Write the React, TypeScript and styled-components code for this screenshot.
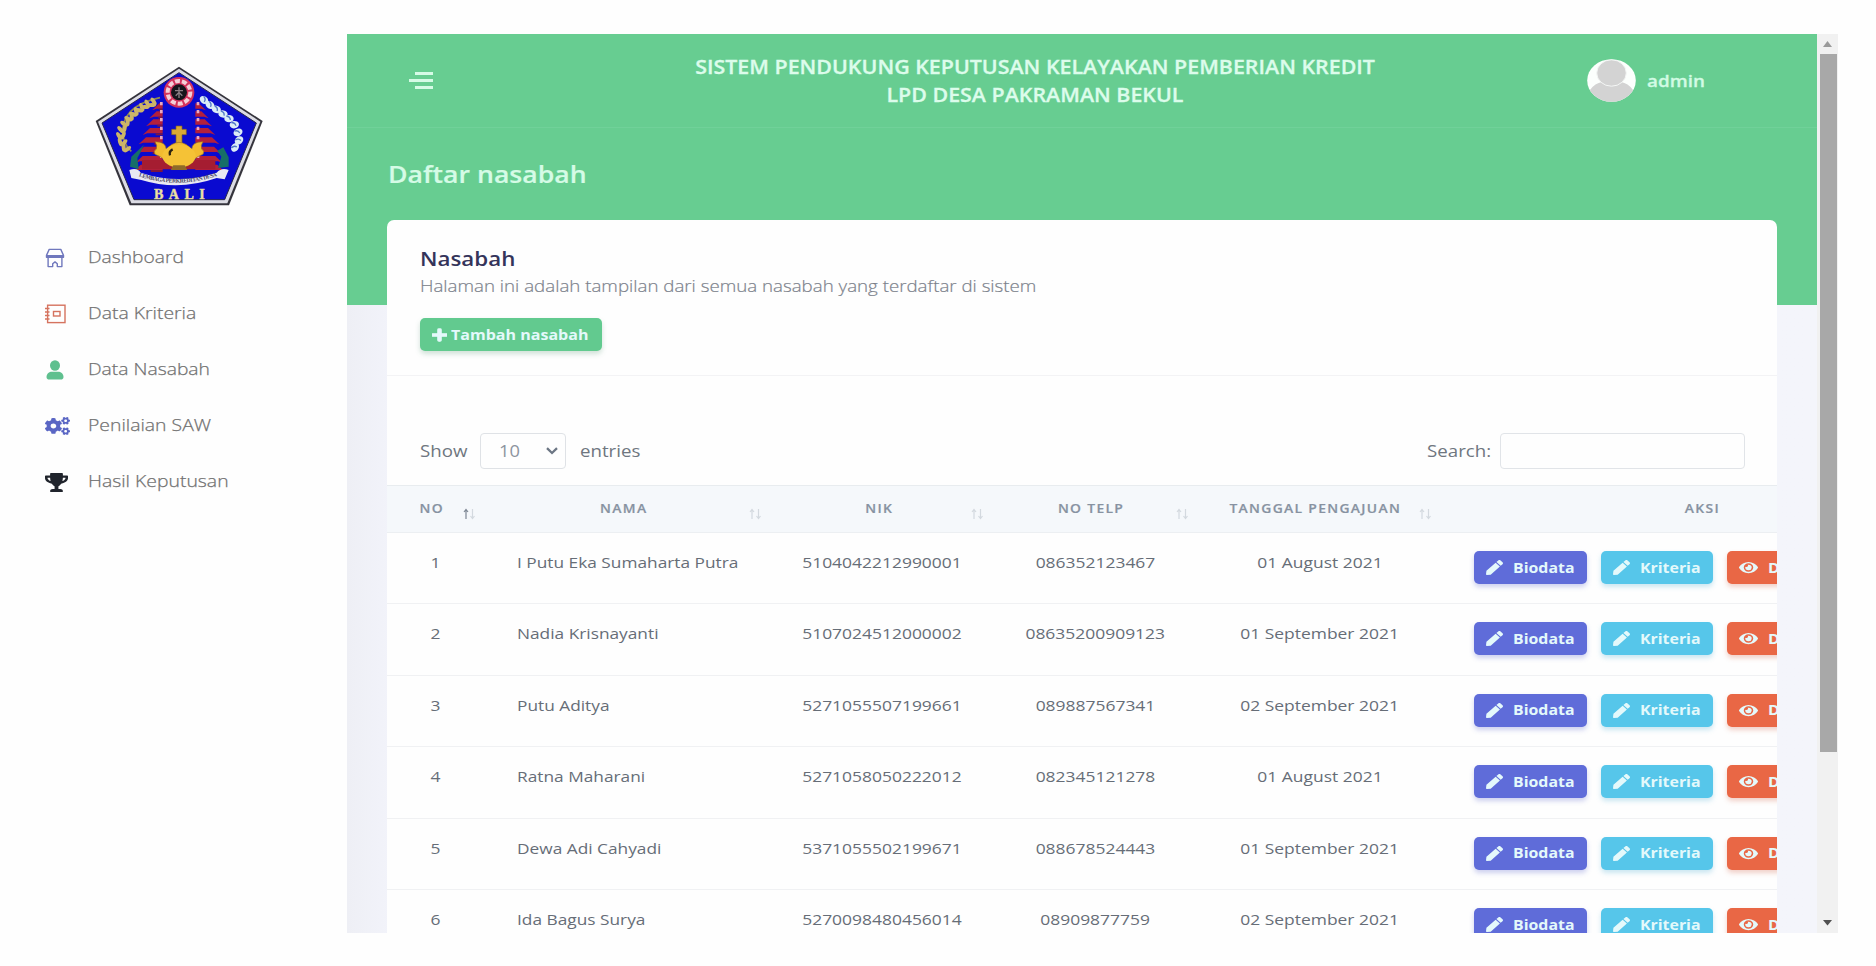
import React from "react";
import styled, { createGlobalStyle } from "styled-components";
import { FaCogs, FaTrophy, FaPlus, FaPen, FaEye } from "react-icons/fa";

const GlobalStyle = createGlobalStyle`
  * { box-sizing: border-box; }
  body {
    margin: 0;
    background: #fefefe;
    font-family: "Open Sans", "Noto Sans", sans-serif;
  }
`;

const COLUMNS = "97.5px 286.5px 222px 205px 243px 522px";

/* Horizontally extended text; `$origin` says which edge stays in place. */
const Wide = styled.span<{ $x?: number; $origin?: string }>`
  display: inline-block;
  white-space: nowrap;
  transform: scaleX(${(p) => p.$x ?? 1.14});
  transform-origin: ${(p) => p.$origin ?? "left"} center;
`;

const Screen = styled.div`
  display: flex;
  width: 1838px;
  height: 899px;
  margin-top: 34px;
  overflow: hidden;
`;

const Sidebar = styled.aside`
  width: 347px;
  flex: none;
  padding: 32px 0 0 44px;
`;

const Crest = styled.svg`
  display: block;
  width: 168px;
  height: 140px;
  margin-left: 51px;
`;

const Menu = styled.nav`
  display: flex;
  flex-direction: column;
  margin-top: 23px;
`;

const MenuItem = styled.a`
  display: flex;
  align-items: center;
  height: 56px;
  color: #6e6e6e;
  font-size: 17px;
  font-weight: 300;
  line-height: 24px;
  -webkit-text-stroke: 0.25px #777;
`;

const MenuIcon = styled.span`
  display: flex;
  width: 44px;
  padding: 2px 0 0 1px;
`;

const Main = styled.main`
  flex: 1;
  min-width: 0;
  height: 899px;
  overflow: hidden;
  background: linear-gradient(90deg, #eeeff5, #f2f3fa 3%, #f4f5fb);
`;

const Hero = styled.header`
  height: 270.5px;
  background: #67cd91;
`;

const TopBar = styled.div`
  display: flex;
  height: 94px;
  padding: 0 113px 0 62px;
  border-bottom: 1px solid #70d199;
`;

const Burger = styled.button`
  display: flex;
  flex-direction: column;
  align-items: flex-end;
  gap: 4px;
  width: 24px;
  margin: 38px 0 0;
  padding: 0;
  border: 0;
  background: none;
`;

const BurgerLine = styled.span<{ $w: number }>`
  width: ${(p) => p.$w}px;
  height: 3px;
  background: #d6fbe6;
`;

const SystemTitle = styled.div`
  flex: none;
  width: 700px;
  margin: 19px 0 0 252px;
  color: #dcfceb;
  font-size: 19px;
  font-weight: 600;
  line-height: 28.4px;
  text-align: center;
  -webkit-text-stroke: 0.3px #dcfceb;
`;

const Account = styled.div`
  display: flex;
  align-items: center;
  gap: 10.5px;
  height: 43px;
  margin: 25px 0 0 202px;
  color: #d2fbe4;
  font-size: 16.7px;
  font-weight: 600;
  -webkit-text-stroke: 0.3px #d2fbe4;
`;

const PageTitle = styled.h1`
  margin: 0;
  padding: 29px 0 0 40.5px;
  color: #d5fbe6;
  font-size: 23.5px;
  font-weight: 600;
  line-height: 34px;
  -webkit-text-stroke: 0.2px #d5fbe6;
`;

const Card = styled.section`
  width: 1390px;
  height: 900px;
  margin: -84.5px 0 0 40px;
  overflow: hidden;
  border-radius: 7px 7px 0 0;
  background: #fefefe;
`;

const CardHeader = styled.div`
  height: 156px;
  padding: 25px 0 0 32.5px;
  border-bottom: 1px solid #f3f3f5;
`;

const CardTitle = styled.h2`
  margin: 0;
  color: #34345a;
  font-size: 19.6px;
  font-weight: 600;
  line-height: 28px;
`;

const CardText = styled.p`
  margin: 0;
  color: #777c86;
  font-size: 16.45px;
  font-weight: 300;
  line-height: 26px;
  -webkit-text-stroke: 0.2px #8a8f99;
`;

const Button = styled.button<{ $bg: string; $w: number; $shadow: string }>`
  display: flex;
  flex: none;
  align-items: center;
  width: ${(p) => p.$w}px;
  height: 33px;
  padding: 0 0 0 12px;
  border: 0;
  border-radius: 5px;
  background: ${(p) => p.$bg};
  box-shadow: 0 3px 5px ${(p) => p.$shadow};
  color: #e4f9fb;
  font: 700 14.2px/20px "Open Sans", sans-serif;
`;

const AddButton = styled(Button)`
  gap: 4.5px;
  margin-top: 19px;
`;

const ActionButton = styled(Button)`
  gap: 9.5px;
`;

const Controls = styled.div`
  display: flex;
  align-items: center;
  height: 36px;
  margin: 57px 32px 16px 32.5px;
  color: #6f7680;
  font-size: 16.7px;
`;

const Label = styled.label<{ $w: number }>`
  flex: none;
  width: ${(p) => p.$w}px;
  line-height: 24px;
`;

const LengthSelect = styled.div`
  display: flex;
  align-items: center;
  justify-content: space-between;
  width: 86px;
  height: 36px;
  margin-right: 14px;
  padding: 0 7px 0 18px;
  border: 1px solid #dfe2e6;
  border-radius: 4px;
  color: #8d949e;
  font-size: 16px;
`;

const SearchInput = styled.input`
  width: 245px;
  height: 36px;
  border: 1px solid #e1e4e8;
  border-radius: 4px;
  background: #fefefe;
`;

const Spacer = styled.div`
  flex: 1;
`;

const HeadRow = styled.div`
  display: grid;
  grid-template-columns: ${COLUMNS};
  width: 1576px;
  height: 48px;
  border-top: 1px solid #e8ecef;
  border-bottom: 1px solid #eceff2;
  background: #f5f8fb;
`;

const HeadCell = styled.div<{ $shift: number }>`
  display: grid;
  align-items: center;
  justify-items: center;
  padding-bottom: 1px;
  color: #8792a1;
  font-size: 12.2px;
  font-weight: 600;
  letter-spacing: 1.15px;
  -webkit-text-stroke: 0.2px #8b96a5;

  > * { grid-area: 1 / 1; }
  > span { margin-right: ${(p) => p.$shift}px; }
`;

const SortMark = styled.svg`
  justify-self: end;
  width: 12px;
  height: 12px;
  margin: 11px 10px 0 0;
  fill: none;
  stroke-width: 1.2;
`;

const Row = styled.div`
  display: grid;
  grid-template-columns: ${COLUMNS};
  width: 1576px;
  height: 71.45px;
  border-bottom: 1.5px solid #f0f1f3;
  color: #666d77;
  font-size: 15.3px;
  line-height: 22px;
`;

const Cell = styled.div<{ $left?: boolean }>`
  padding: 18px 0 0 ${(p) => (p.$left ? "32px" : "0")};
  text-align: ${(p) => (p.$left ? "left" : "center")};
`;

const Actions = styled.div`
  display: flex;
  gap: 14px;
  padding: 18px 0 0 33px;
`;

const Scrollbar = styled.div`
  display: flex;
  flex-direction: column;
  align-items: center;
  justify-content: space-between;
  width: 21px;
  height: 899px;
  padding: 7px 0;
  background: #f1f1f1;
`;

const Thumb = styled.div`
  width: 17.5px;
  height: 698px;
  margin: 7px 0 auto 2px;
  background: #a8a8a8;
`;

const Arrow = styled.svg`
  width: 9px;
  height: 6px;
`;

const rows = [
  ["I Putu Eka Sumaharta Putra", "5104042212990001", "086352123467", "01 August 2021"],
  ["Nadia Krisnayanti", "5107024512000002", "08635200909123", "01 September 2021"],
  ["Putu Aditya", "5271055507199661", "089887567341", "02 September 2021"],
  ["Ratna Maharani", "5271058050222012", "082345121278", "01 August 2021"],
  ["Dewa Adi Cahyadi", "5371055502199671", "088678524443", "01 September 2021"],
  ["Ida Bagus Surya", "5270098480456014", "08909877759", "02 September 2021"],
];

const heads = [
  { label: "NO", shift: 8 },
  { label: "NAMA", shift: 8 },
  { label: "NIK", shift: 6 },
  { label: "NO TELP", shift: 8 },
  { label: "TANGGAL PENGAJUAN", shift: 8 },
  { label: "AKSI", shift: 0 },
];

const stretch = { preserveAspectRatio: "none" };

const StoreIcon = () => (
  <svg width="20" height="20" viewBox="0 0 20 20" fill="none" stroke="#7078bd" strokeWidth="1.4" strokeLinejoin="round">
    <path d="M4.200 1.400h11.600l2.700 6v1.800H1.500V7.400zM1.500 7.800h17" />
    <path d="M3.100 9.200v9.400h4.600v-2.800L10 13.900l2.300 1.900v2.800h4.600V9.200" />
  </svg>
);

const BookIcon = () => (
  <svg width="21" height="20" viewBox="0 0 21 20" fill="none" stroke="#d5735f" strokeWidth="1.400">
    <rect x="2.600" y="1.200" width="17.400" height="17.400" />
    <rect x="8.500" y="7.500" width="6.500" height="4.500" />
    <path d="M0 4.500h4.500M0 8h4.500M0 11.500h4.500M0 15h4.500" />
  </svg>
);

const PersonIcon = () => (
  <svg width="22" height="20" viewBox="0 0 22 20" fill="#5fc08f">
    <ellipse cx="10" cy="5.500" rx="5" ry="5.200" />
    <path d="M1.500 17c0-3.500 3-5.200 5.200-5.200h6.600c2.200 0 5.200 1.700 5.200 5.200 0 2-1.400 2.600-2.600 2.600H4.100c-1.200 0-2.600-.6-2.600-2.600z" />
  </svg>
);

const menu = [
  { label: "Dashboard", icon: <StoreIcon />, x: 1.13 },
  { label: "Data Kriteria", icon: <BookIcon />, x: 1.14 },
  { label: "Data Nasabah", icon: <PersonIcon />, x: 1.135 },
  { label: "Penilaian SAW", icon: <FaCogs {...stretch} style={{ width: 25, height: 18 }} color="#5a66c4" />, x: 1.14 },
  { label: "Hasil Keputusan", icon: <FaTrophy {...stretch} style={{ width: 23, height: 19 }} color="#20242c" />, x: 1.14 },
];

const roofs = [
  [160, 238, 20],
  [184, 230, 26],
  [208, 220, 32],
  [234, 210, 42],
  [262, 198, 50],
  [290, 192, 60],
  [318, 188, 66],
  [344, 182, 72],
];

const petals = [
  [372, 150, 40], [390, 165, 30], [409, 178, 20], [429, 192, 10], [447, 206, 0],
  [463, 224, -10], [474, 247, -25], [477, 271, -40], [465, 292, -55],
];

const grains = [
  [215, 158, -62], [196, 164, -58], [179, 174, -50], [162, 186, -45], [148, 200, -38],
  [136, 216, -28], [127, 234, -15], [123, 254, -3], [127, 274, 12], [138, 292, 25],
];

function BaliCrest() {
  return (
    <Crest viewBox="45 48 504 420" preserveAspectRatio="none">
      <path d="M297 50 548 213 447 466H149L47 213z" fill="#35343c" />
      <path d="M297 56 541 215 442 460H154L54 215z" fill="#dcdce4" />
      <path d="M297 68 529 219 434 449H162L66 219z" fill="#0a0ad0" stroke="#26264a" strokeWidth="3" />
      {roofs.map(([y, x, w]) => (
        <g key={y} fill="#b3203c">
          <path d={`M${x} ${y}h${248 - x}v16h${-(248 - x) - 8}l-14 5z`} />
          <path d={`M${594 - x} ${y}h${-(248 - x)}v16h${248 - x + 8}l14 5z`} />
          <path d={`M240 ${y - 4}h8v10h-8zM350 ${y - 4}h8v10h-8z`} fill="#e8a9c4" />
          <path d={`M${248 - w / 2} ${y + 16}h${w / 2}v6h${-w / 2}z`} fill="#7c1740" />
        </g>
      ))}
      <path d="M186 330h220v28H186z" fill="#a51d31" />
      <circle cx="297" cy="127" r="46" fill="#d3325c" />
      <circle cx="297" cy="127" r="34" fill="none" stroke="#f3cfd8" strokeWidth="12" strokeDasharray="15 6" />
      <circle cx="297" cy="127" r="24" fill="#15151b" />
      <path d="M285 122h24M297 112v32M287 137l10-10 10 10" stroke="#8b7e84" strokeWidth="4" fill="none" />
      <path d="M240 143Q115 170 130 262q6 26 24 42" fill="none" stroke="#8f8a52" strokeWidth="5" />
      {grains.map(([x, y, r]) => (
        <g key={y} transform={`translate(${x} ${y}) rotate(${r})`} fill="#cdb568">
          <ellipse cx="-7" cy="0" rx="6" ry="13" transform="rotate(-28)" />
          <ellipse cx="7" cy="0" rx="6" ry="13" transform="rotate(28)" />
        </g>
      ))}
      {petals.map(([x, y, r]) => (
        <g key={y} transform={`translate(${x} ${y}) rotate(${r})`}>
          <ellipse rx="14" ry="11" fill="#dcecf6" />
          <path d="M-8-8q12 2 12 12" stroke="#5078c8" strokeWidth="4" fill="none" />
        </g>
      ))}
      <path d="M150 350l4-30 38-36-12 26-8 14 4 34zM446 350v-28l-16-30-18 10 12 18-10 34z" fill="#176e68" />
      <path d="M288 228h18v10h13v16h-13v26h-18v-26h-13v-16h13z" fill="#d9a935" stroke="#80602a" strokeWidth="2" />
      <path d="M225 275q34 0 34 24 14-20 38-22 24 2 38 22 0-24 34-24-8 12-4 22 10 6 4 16-16 6-26 14-14 26-46 26t-46-26q-10-8-26-14-6-10 4-16 4-10-4-22z" fill="#f2bb2f" stroke="#9a7026" strokeWidth="2" />
      <ellipse cx="297" cy="318" rx="50" ry="34" fill="#f5c236" />
      <path d="M272 360h50l-8-14h-34z" fill="#8e6b28" />
      <path d="M278 298q-12 6-8 18" stroke="#2b2210" strokeWidth="7" fill="none" />
      <path d="M148 360q24-8 34 8 114 38 228 0 14-16 36-8l-12 28-24-4q-114 40-226 6l-30-6z" fill="#e9e9f2" />
      <path id="ribbon" d="M176 379q120 40 244-4" fill="none" />
      <text fill="#45455e" fontFamily="Liberation Serif" fontWeight="700" fontSize="17">
        <textPath href="#ribbon" textLength="240">LEMBAGA PERKREDITAN DESA</textPath>
      </text>
      <text x="222" y="446" textLength="152" fill="#f1e3a2" stroke="#d9cfa0" strokeWidth="1.500" fontFamily="Liberation Serif" fontWeight="700" fontSize="42">
        BALI
      </text>
    </Crest>
  );
}

function Avatar() {
  return (
    <svg width="49" height="43" viewBox="0 0 49 43">
      <clipPath id="face">
        <ellipse cx="24.500" cy="21.500" rx="24.300" ry="21.300" />
      </clipPath>
      <g clipPath="url(#face)">
        <path d="M0 0h49v43H0z" fill="#fcfffd" />
        <path d="M3 31q5-7 12-8 9 7 19 0 7 1 12 8v12H3z" fill="#d3d3d3" />
        <ellipse cx="24.500" cy="14" rx="14.800" ry="13.200" fill="#d3d3d3" stroke="#f4f6f5" strokeWidth="1" />
      </g>
    </svg>
  );
}

function Sort({ active }: { active?: boolean }) {
  return (
    <SortMark viewBox="0 0 12 12">
      <path d="M3 11V1.500M1 4l2-2.500L5 4" stroke={active ? "#7d8794" : "#d3d9df"} />
      <path d="M9.500 1v9.500M7.500 8l2 2.500 2-2.500" stroke="#d3d9df" />
    </SortMark>
  );
}

export default function App() {
  return (
    <>
      <GlobalStyle />
      <Screen>
        <Sidebar>
          <BaliCrest />
          <Menu>
            {menu.map((m) => (
              <MenuItem key={m.label}>
                <MenuIcon>{m.icon}</MenuIcon>
                <Wide $x={m.x}>{m.label}</Wide>
              </MenuItem>
            ))}
          </Menu>
        </Sidebar>
        <Main>
          <Hero>
            <TopBar>
              <Burger>
                <BurgerLine $w={18} />
                <BurgerLine $w={24} />
                <BurgerLine $w={18} />
              </Burger>
              <SystemTitle>
                <Wide $origin="center" $x={1.125}>SISTEM PENDUKUNG KEPUTUSAN KELAYAKAN PEMBERIAN KREDIT</Wide>
                <Wide $origin="center" $x={1.125}>LPD DESA PAKRAMAN BEKUL</Wide>
              </SystemTitle>
              <Account>
                <Avatar />
                <Wide $x={1.13}>admin</Wide>
              </Account>
            </TopBar>
            <PageTitle>
              <Wide $x={1.133}>Daftar nasabah</Wide>
            </PageTitle>
          </Hero>
          <Card>
            <CardHeader>
              <CardTitle>
                <Wide>Nasabah</Wide>
              </CardTitle>
              <CardText>
                <Wide $x={1.138}>Halaman ini adalah tampilan dari semua nasabah yang terdaftar di sistem</Wide>
              </CardText>
              <AddButton $bg="#62ca8f" $w={182} $shadow="rgba(70,140,105,.25)">
                <FaPlus {...stretch} style={{ width: 15, height: 14 }} strokeWidth={40} stroke="currentColor" />
                <Wide $x={1.13}>Tambah nasabah</Wide>
              </AddButton>
            </CardHeader>
            <Controls>
              <Label $w={60}>
                <Wide $x={1.12}>Show</Wide>
              </Label>
              <LengthSelect>
                <Wide>10</Wide>
                <svg width="12" height="8" viewBox="0 0 12 8" fill="none" stroke="#6c7684" strokeWidth="2.300">
                  <path d="M1 1.200l5 4.800 5-4.800" />
                </svg>
              </LengthSelect>
              <Label $w={60}>
                <Wide $x={1.12}>entries</Wide>
              </Label>
              <Spacer />
              <Label $w={73}>
                <Wide $x={1.12}>Search:</Wide>
              </Label>
              <SearchInput />
            </Controls>
            <HeadRow>
              {heads.map((h, i) => (
                <HeadCell key={h.label} $shift={h.shift}>
                  <Wide $origin="center">{h.label}</Wide>
                  {i < 5 && <Sort active={i === 0} />}
                </HeadCell>
              ))}
            </HeadRow>
            {rows.map(([name, nik, phone, date], i) => (
              <Row key={nik}>
                <Cell><Wide $origin="center">{i + 1}</Wide></Cell>
                <Cell $left><Wide $x={1.13}>{name}</Wide></Cell>
                <Cell><Wide $origin="center">{nik}</Wide></Cell>
                <Cell><Wide $origin="center">{phone}</Wide></Cell>
                <Cell><Wide $origin="center">{date}</Wide></Cell>
                <Actions>
                  <ActionButton $bg="#5f6cd9" $w={113} $shadow="rgba(80,90,200,.28)">
                    <FaPen {...stretch} style={{ width: 17, height: 15 }} />
                    <Wide $x={1.12}>Biodata</Wide>
                  </ActionButton>
                  <ActionButton $bg="#56c6ea" $w={112} $shadow="rgba(70,170,210,.28)">
                    <FaPen {...stretch} style={{ width: 17, height: 15 }} />
                    <Wide $x={1.12}>Kriteria</Wide>
                  </ActionButton>
                  <ActionButton $bg="#e96745" $w={104} $shadow="rgba(210,90,60,.28)">
                    <FaEye {...stretch} style={{ width: 19, height: 15 }} />
                    <Wide $x={1.12}>Detail</Wide>
                  </ActionButton>
                </Actions>
              </Row>
            ))}
          </Card>
        </Main>
        <Scrollbar>
          <Arrow viewBox="0 0 9 6"><path d="M4.500 0 9 6H0z" fill="#9a9a9a" /></Arrow>
          <Thumb />
          <Arrow viewBox="0 0 9 6"><path d="M0 0h9L4.500 5.500z" fill="#505050" /></Arrow>
        </Scrollbar>
      </Screen>
    </>
  );
}
